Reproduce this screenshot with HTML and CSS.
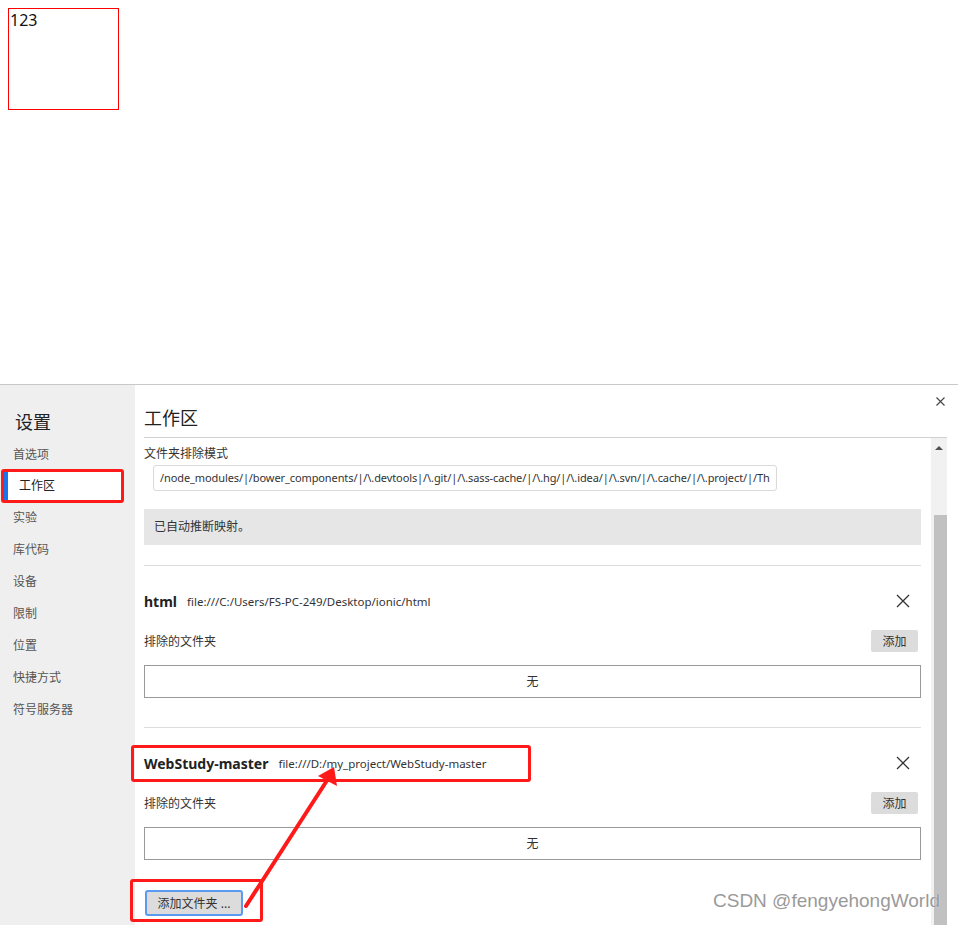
FILE: index.html
```html
<!DOCTYPE html>
<html lang="zh-CN">
<head>
<meta charset="utf-8">
<title>设置 - 工作区</title>
<link rel="stylesheet" href="styles.css">
</head>
<body>
<div class="demo-box">123</div>

<div class="panel">
  <nav class="sidebar">
    <div class="sidebar-title">设置</div>
    <div class="nav-item">首选项</div>
    <div class="nav-item selected">工作区</div>
    <div class="nav-item">实验</div>
    <div class="nav-item">库代码</div>
    <div class="nav-item">设备</div>
    <div class="nav-item">限制</div>
    <div class="nav-item">位置</div>
    <div class="nav-item">快捷方式</div>
    <div class="nav-item">符号服务器</div>
  </nav>
  <main class="main">
    <header class="main-header">
      <h1 class="main-title">工作区</h1>
      <svg class="panel-close" width="9" height="9" viewBox="0 0 9 9"><path d="M0.5 0.5 L8.5 8.5 M8.5 0.5 L0.5 8.5" stroke="#444" stroke-width="1.1" fill="none"/></svg>
    </header>
    <div class="scroll-area">
      <div class="content">
        <div class="field-label">文件夹排除模式</div>
        <div class="text-input">/node_modules/|/bower_components/|/\.devtools|/\.git/|/\.sass-cache/|/\.hg/|/\.idea/|/\.svn/|/\.cache/|/\.project/|/Th</div>
        <div class="info-box">已自动推断映射。</div>

        <section class="folder">
          <div class="folder-row">
            <span class="folder-name">html</span>
            <span class="folder-path">file:///C:/Users/FS-PC-249/Desktop/ionic/html</span>
            <svg class="folder-remove" width="14" height="14" viewBox="0 0 14 14"><path d="M1 1 L13 13 M13 1 L1 13" stroke="#333" stroke-width="1.3" fill="none"/></svg>
          </div>
          <div class="exclude-row">
            <span class="exclude-label">排除的文件夹</span>
            <button class="add-btn">添加</button>
          </div>
          <div class="empty-list">无</div>
        </section>

        <section class="folder">
          <div class="folder-row">
            <span class="folder-name">WebStudy-master</span>
            <span class="folder-path">file:///D:/my_project/WebStudy-master</span>
            <svg class="folder-remove" width="14" height="14" viewBox="0 0 14 14"><path d="M1 1 L13 13 M13 1 L1 13" stroke="#333" stroke-width="1.3" fill="none"/></svg>
          </div>
          <div class="exclude-row">
            <span class="exclude-label">排除的文件夹</span>
            <button class="add-btn">添加</button>
          </div>
          <div class="empty-list">无</div>
        </section>

        <button class="add-folder-btn">添加文件夹 ...</button>
      </div>
      <div class="scrollbar">
        <div class="scroll-up"></div>
        <div class="scroll-thumb"></div>
      </div>
    </div>
  </main>
</div>

<div class="mark mark-nav"></div>
<div class="mark mark-folder"></div>
<div class="mark mark-button"></div>
<svg class="arrow" width="958" height="925" viewBox="0 0 958 925">
  <path d="M246 906 L326 782" stroke="#ff1a1a" stroke-width="4" stroke-linecap="round" fill="none"/>
  <polygon points="334,767 337,786 318,776" fill="#ff1a1a"/>
</svg>
<div class="watermark">CSDN @fengyehongWorld</div>
</body>
</html>
```

FILE: styles.css
```css
html, body {
  margin: 0;
  padding: 0;
  background: #fff;
}
body {
  position: relative;
  width: 958px;
  height: 925px;
  overflow: hidden;
  font-family: "Noto Sans", "Noto Sans CJK SC", sans-serif;
  color: #333;
}

.demo-box {
  margin: 8px 0 0 8px;
  width: 111px;
  height: 102px;
  box-sizing: border-box;
  border: 1px solid #ff0000;
  padding-left: 1px;
  font-size: 16px;
  line-height: 22px;
  color: #111;
}

.panel {
  margin-top: 274px;
  height: 540px;
  border-top: 1px solid #c8c8c8;
  display: flex;
  font-size: 12px;
}

/* sidebar */
.sidebar {
  width: 135px;
  flex: none;
  background: #efefef;
}
.sidebar-title {
  height: 54px;
  padding: 26px 0 0 15px;
  box-sizing: border-box;
  font-size: 18px;
  line-height: 22px;
  color: #222;
}
.nav-item {
  height: 32px;
  line-height: 32px;
  padding-left: 13px;
  color: #555;
  font-size: 12px;
}
.nav-item.selected {
  margin: 0 12px 1px 3px;
  height: 30px;
  line-height: 30px;
  background: #fff;
  border-left: 5px solid #1a73e8;
  padding-left: 11px;
  color: #222;
}

/* main */
.main {
  flex: 1;
  display: flex;
  flex-direction: column;
  padding-left: 9px;
  margin-right: 11px;
  min-width: 0;
}
.main-header {
  position: relative;
  height: 53px;
  border-bottom: 1px solid #d0d0d0;
  box-sizing: border-box;
  display: flex;
  align-items: flex-start;
}
.main-title {
  margin: 21px 0 0 0;
  font-size: 18px;
  font-weight: normal;
  line-height: 24px;
  color: #222;
}
.panel-close {
  position: absolute;
  right: 2px;
  top: 12px;
}

.scroll-area {
  flex: 1;
  display: flex;
  min-height: 0;
}
.content {
  flex: 1;
  padding-right: 10px;
  min-width: 0;
}
.field-label {
  margin-top: 8px;
  line-height: 16px;
  color: #333;
}
.text-input {
  margin: 3px 0 0 9px;
  width: 624px;
  height: 26px;
  box-sizing: border-box;
  border: 1px solid #dadada;
  border-radius: 3px;
  padding: 0 6px;
  line-height: 24px;
  white-space: nowrap;
  overflow: hidden;
  color: #333;
  font-size: 11px;
  letter-spacing: -0.1px;
}
.info-box {
  margin-top: 18px;
  height: 36px;
  line-height: 36px;
  background: #e6e6e6;
  padding-left: 10px;
  color: #333;
}

.folder {
  margin-top: 20px;
  border-top: 1px solid #dddddd;
}
.folder + .folder {
  margin-top: 29px;
}
.folder-row {
  margin-top: 23px;
  height: 24px;
  display: flex;
  align-items: center;
}
.folder-name {
  font-size: 14px;
  font-weight: bold;
  color: #222;
}
.folder-path {
  margin-left: 10px;
  font-size: 11.5px;
  color: #333;
}
.folder-remove {
  margin-left: auto;
  margin-right: 11px;
}
.exclude-row {
  margin-top: 17px;
  height: 22px;
  display: flex;
  align-items: center;
}
.add-btn {
  margin-left: auto;
  margin-right: 3px;
  width: 47px;
  height: 22px;
  border: none;
  border-radius: 2px;
  background: #dcdcdc;
  font-family: inherit;
  font-size: 12px;
  color: #333;
  padding: 0;
}
.empty-list {
  margin-top: 13px;
  height: 33px;
  box-sizing: border-box;
  border: 1px solid #999;
  text-align: center;
  line-height: 31px;
  color: #333;
}
.add-folder-btn {
  display: block;
  margin: 30px 0 0 1px;
  width: 98px;
  height: 26px;
  border: 2px solid #5b9af0;
  border-radius: 3px;
  background: #dcdcdc;
  font-family: inherit;
  font-size: 12px;
  color: #333;
  padding: 0;
}

.scrollbar {
  width: 16px;
  flex: none;
  background: #f1f1f1;
  display: flex;
  flex-direction: column;
  align-items: center;
}
.scroll-up {
  margin-top: 8px;
  width: 0;
  height: 0;
  border-left: 4px solid transparent;
  border-right: 4px solid transparent;
  border-bottom: 4px solid #505050;
}
.scroll-thumb {
  margin-top: 65px;
  margin-left: 2px;
  width: 13px;
  flex: 1;
  background: #c1c1c1;
}

/* annotations overlay */
.mark {
  position: absolute;
  border: 3px solid #ff1a1a;
  border-radius: 3px;
  box-sizing: border-box;
}
.mark-nav { left: 1px; top: 469px; width: 123px; height: 34px; }
.mark-folder { left: 131px; top: 745px; width: 400px; height: 37px; }
.mark-button { left: 130px; top: 879px; width: 133px; height: 43px; }
.arrow {
  position: absolute;
  left: 0;
  top: 0;
  pointer-events: none;
}
.watermark {
  position: absolute;
  left: 713px;
  top: 890px;
  font-family: "Liberation Sans", sans-serif;
  font-size: 19px;
  color: #9a9a9a;
  text-shadow: 0 0 1px #fff;
  white-space: nowrap;
}
```
